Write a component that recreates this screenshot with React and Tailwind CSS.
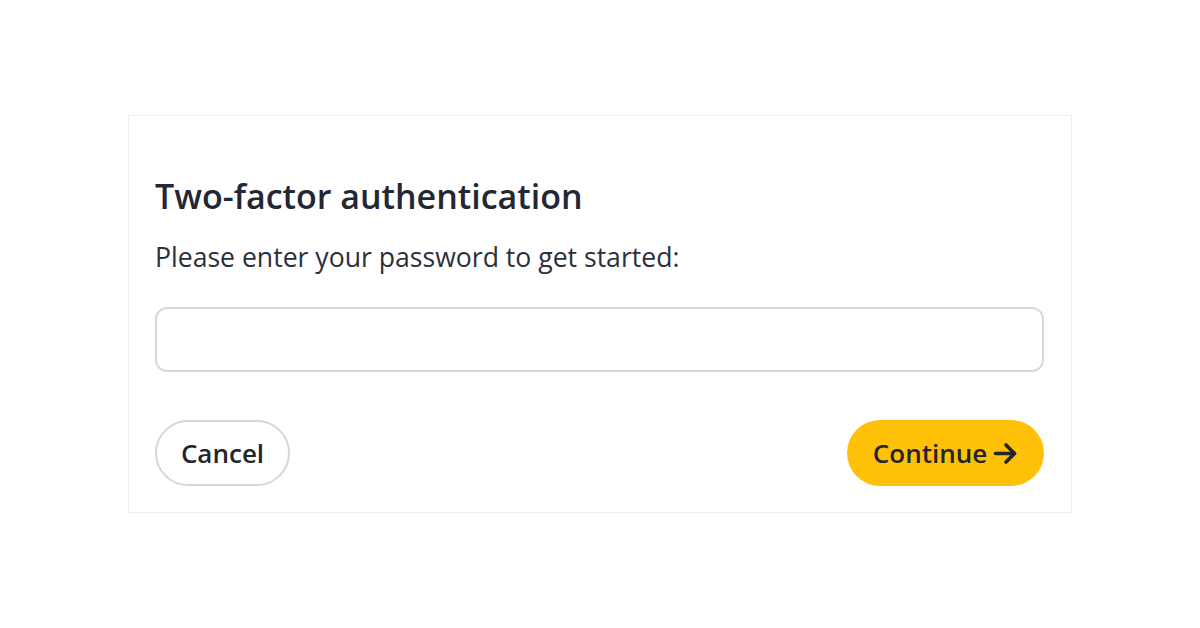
const ArrowIcon = () => (
  <svg width="25" height="23" viewBox="0 0 25 23" fill="none" stroke="currentColor" strokeWidth="3.6" strokeLinecap="round" strokeLinejoin="round">
    <path d="M2.5 11.5H21.5" />
    <path d="M13 3L21.5 11.5L13 20" />
  </svg>
);

const App = () => {
  return (
    <div
      className="w-full h-[628px] bg-white flex items-center justify-center"
      style={{ fontFamily: '"Open Sans", "Noto Sans", sans-serif' }}
    >
      {/* Card */}
      <div className="w-[944px] border border-[#efefef] bg-white pt-[60px] pl-[26px] pr-[27px] pb-[26px] flex flex-col">
        <h1 className="text-[34px] leading-[40px] font-semibold text-[#232733]">
          Two-factor authentication
        </h1>
        <p className="mt-[25px] text-[26.6px] leading-[32px] text-[#2b303b]">
          Please enter your password to get started:
        </p>
        <input
          type="password"
          className="mt-[34px] h-[65px] w-full rounded-[12px] border-2 border-[#d5d9de] bg-white px-4 text-[24px] outline-none"
        />
        <div className="mt-[48px] flex items-center justify-between">
          <button className="h-[66px] w-[135px] rounded-full border-2 border-[#d7d7d7] bg-white text-[26px] font-semibold text-[#22252c]">
            Cancel
          </button>
          <button className="h-[66px] w-[197px] rounded-full bg-[#ffc107] flex items-center justify-center gap-[6px] text-[26px] font-semibold text-[#22252c]">
            Continue
            <ArrowIcon />
          </button>
        </div>
      </div>
    </div>
  );
};

export default App;
